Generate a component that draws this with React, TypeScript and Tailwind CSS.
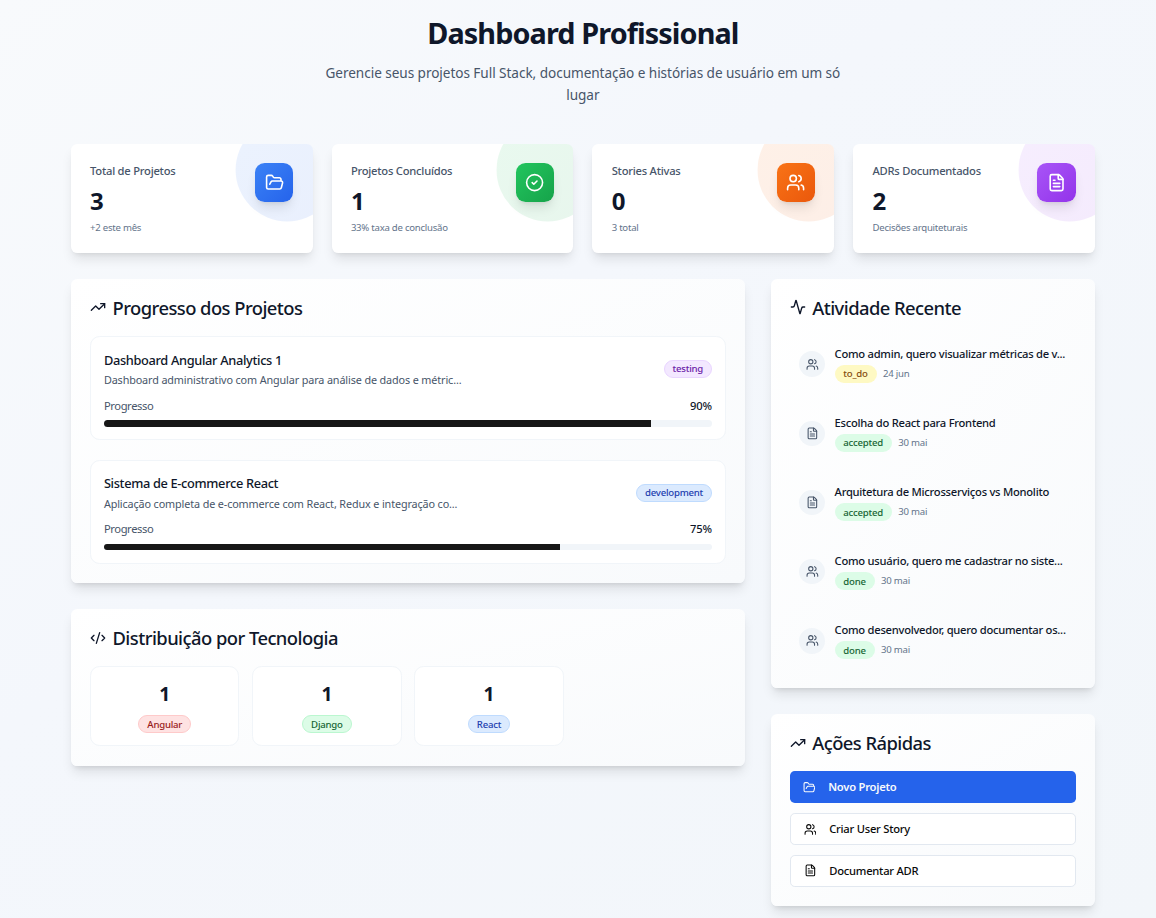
import type { ReactNode } from "react";
import { Activity, CircleCheck, CodeXml, FileText, FolderOpen, TrendingUp, Users, type LucideIcon } from "lucide-react";

const stats: { label: string; value: string; note: string; icon: LucideIcon; fill: string }[] = [
  { label: "Total de Projetos", value: "3", note: "+2 este mês", icon: FolderOpen, fill: "bg-[linear-gradient(to_bottom_right,#3b82f6,#2563eb)]" },
  { label: "Projetos Concluídos", value: "1", note: "33% taxa de conclusão", icon: CircleCheck, fill: "bg-[linear-gradient(to_bottom_right,#22c55e,#16a34a)]" },
  { label: "Stories Ativas", value: "0", note: "3 total", icon: Users, fill: "bg-[linear-gradient(to_bottom_right,#f97316,#ea580c)]" },
  { label: "ADRs Documentados", value: "2", note: "Decisões arquiteturais", icon: FileText, fill: "bg-[linear-gradient(to_bottom_right,#a855f7,#9333ea)]" },
];

const blue = "border px-2.5 bg-[#dbeafe] text-[#1e40af] border-[#bfdbfe]";
const green = "border px-2.5 bg-[#dcfce7] text-[#166534] border-[#bbf7d0]";
const red = "border px-2.5 bg-[#fee2e2] text-[#991b1b] border-[#fecaca]";
const purple = "border px-2.5 bg-[#f3e8ff] text-[#6b21a8] border-[#e9d5ff]";
const plainGreen = "border-y px-[11px] bg-[#dcfce7] text-[#166534] border-transparent";
const plainYellow = "border-y px-[11px] bg-[#fef9c3] text-[#854d0e] border-transparent";

const projects = [
  { title: "Dashboard Angular Analytics 1", text: "Dashboard administrativo com Angular para análise de dados e métric...", status: "testing", tone: purple, progress: 90 },
  { title: "Sistema de E-commerce React", text: "Aplicação completa de e-commerce com React, Redux e integração co...", status: "development", tone: blue, progress: 75 },
];

const technologies = [
  { name: "Angular", count: 1, tone: red },
  { name: "Django", count: 1, tone: green },
  { name: "React", count: 1, tone: blue },
];

const activities: { title: string; status: string; tone: string; date: string; icon: LucideIcon }[] = [
  { title: "Como admin, quero visualizar métricas de v...", status: "to_do", tone: plainYellow, date: "24 jun", icon: Users },
  { title: "Escolha do React para Frontend", status: "accepted", tone: plainGreen, date: "30 mai", icon: FileText },
  { title: "Arquitetura de Microsserviços vs Monolito", status: "accepted", tone: plainGreen, date: "30 mai", icon: FileText },
  { title: "Como usuário, quero me cadastrar no siste...", status: "done", tone: plainGreen, date: "30 mai", icon: Users },
  { title: "Como desenvolvedor, quero documentar os...", status: "done", tone: plainGreen, date: "30 mai", icon: Users },
];

const shadow = "shadow-[0_10px_15px_-3px_rgb(0_0_0/0.1),0_4px_6px_-4px_rgb(0_0_0/0.1)]";

function Badge({ tone, children }: { tone: string; children: ReactNode }) {
  return (
    <span className={`inline-flex items-center whitespace-nowrap rounded-full pt-[3px] pb-px text-xs font-medium tracking-[-0.024em] ${tone}`}>
      {children}
    </span>
  );
}

function Panel({ title, icon: Icon, children }: { title: string; icon: LucideIcon; children: ReactNode }) {
  return (
    <section className={`rounded-lg bg-[linear-gradient(to_bottom_right,#ffffff,#f8fafc)] ${shadow}`}>
      <h2 className="flex items-center gap-2 p-6 text-[23px] leading-6 font-medium tracking-[-0.03em] whitespace-nowrap">
        <Icon className="size-5" />
        {title}
      </h2>
      <div className="px-6 pb-6">{children}</div>
    </section>
  );
}

export default function App() {
  return (
    <div className="h-screen overflow-hidden bg-[linear-gradient(to_bottom_right,#f8fafc,#f4f7fc_40%,#f2f6fa)] font-['Noto_Sans',sans-serif] text-[#0f172a]">
      <div className="ml-[88.62px] w-[1280px] pt-[21px] [zoom:0.8]">
        <header className="mb-[47.25px] text-center">
          <h1 className="mb-4 text-4xl font-bold tracking-[-0.031em]">Dashboard Profissional</h1>
          <p className="mx-auto max-w-2xl text-[17px] leading-7 tracking-[-0.004em] text-[#475569]">
            Gerencie seus projetos Full Stack, documentação e histórias de usuário em um só lugar
          </p>
        </header>

        <div className="mb-8 grid grid-cols-4 gap-6">
          {stats.map(({ label, value, note, icon: Icon, fill }) => (
            <div key={label} className={`relative overflow-hidden rounded-lg bg-white p-6 ${shadow}`}>
              <div className={`absolute top-0 right-0 size-32 translate-x-8 -translate-y-8 rounded-full opacity-10 ${fill}`} />
              <div className="relative flex items-start justify-between">
                <div>
                  <p className="text-sm font-medium tracking-[-0.021em] text-[#475569]">{label}</p>
                  <p className="mt-[9px] text-3xl font-bold tracking-[-0.03em]">{value}</p>
                  <p className="mt-2 -mb-px text-xs tracking-[-0.026em] text-[#64748b]">{note}</p>
                </div>
                <div className={`rounded-xl p-3 text-white ${shadow} ${fill}`}>
                  <Icon className="size-6" />
                </div>
              </div>
            </div>
          ))}
        </div>

        <div className="grid grid-cols-3 items-start gap-8">
          <div className="col-span-2 flex flex-col gap-8">
            <Panel title="Progresso dos Projetos" icon={TrendingUp}>
              <div className="flex flex-col gap-6">
                {projects.map((p) => (
                  <div key={p.title} className="rounded-xl border border-[#f1f5f9] bg-white p-4">
                    <div className="mb-3 flex items-center justify-between">
                      <div>
                        <h4 className="pt-px text-base font-medium tracking-[-0.026em]">{p.title}</h4>
                        <p className="mt-[3px] text-[13.5px] leading-5 tracking-[-0.011em] text-[#475569]">{p.text}</p>
                      </div>
                      <Badge tone={p.tone}>{p.status}</Badge>
                    </div>
                    <div className="flex justify-between text-sm">
                      <span className="tracking-[-0.035em] text-[#475569]">Progresso</span>
                      <span className="font-medium tracking-[-0.01em]">{p.progress}%</span>
                    </div>
                    <div className="mt-2 h-2 overflow-hidden rounded-full bg-[#f1f5f9]">
                      <div className="h-full bg-[#171717]" style={{ width: `${p.progress}%` }} />
                    </div>
                  </div>
                ))}
              </div>
            </Panel>

            <Panel title="Distribuição por Tecnologia" icon={CodeXml}>
              <div className="grid grid-cols-4 gap-4">
                {technologies.map((t) => (
                  <div key={t.name} className="flex h-[100px] flex-col items-center rounded-xl border border-[#f1f5f9] bg-white p-4">
                    <div className="mb-[11px] pt-px text-2xl font-bold">{t.count}</div>
                    <Badge tone={t.tone}>{t.name}</Badge>
                  </div>
                ))}
              </div>
            </Panel>
          </div>

          <div className="flex flex-col gap-8">
            <Panel title="Atividade Recente" icon={Activity}>
              <div className="flex flex-col gap-4">
                {activities.map(({ title, status, tone, date, icon: Icon }) => (
                  <div key={title} className="flex items-center gap-3 p-3">
                    <div className="rounded-full bg-[#f1f5f9] p-2 text-[#475569]">
                      <Icon className="size-4" />
                    </div>
                    <div>
                      <p className="text-sm font-medium tracking-[-0.023em] whitespace-nowrap">{title}</p>
                      <div className="mt-1 flex items-center gap-2">
                        <Badge tone={tone}>{status}</Badge>
                        <span className="pt-px text-xs tracking-[-0.023em] text-[#64748b]">{date}</span>
                      </div>
                    </div>
                  </div>
                ))}
              </div>
            </Panel>

            <Panel title="Ações Rápidas" icon={TrendingUp}>
              <div className="flex flex-col gap-3 text-sm font-medium tracking-[-0.021em]">
                <button className="flex h-10 items-center gap-4 rounded-md bg-[#2563eb] px-4 font-semibold text-[#f8fafc]">
                  <FolderOpen className="size-4" />
                  Novo Projeto
                </button>
                <button className="flex h-10 items-center gap-4 rounded-md border border-[#e2e8f0] bg-white px-4 text-[#0a0a0a]">
                  <Users className="size-4" />
                  Criar User Story
                </button>
                <button className="flex h-10 items-center gap-4 rounded-md border border-[#e2e8f0] bg-white px-4 text-[#0a0a0a]">
                  <FileText className="size-4" />
                  Documentar ADR
                </button>
              </div>
            </Panel>
          </div>
        </div>
      </div>
    </div>
  );
}
